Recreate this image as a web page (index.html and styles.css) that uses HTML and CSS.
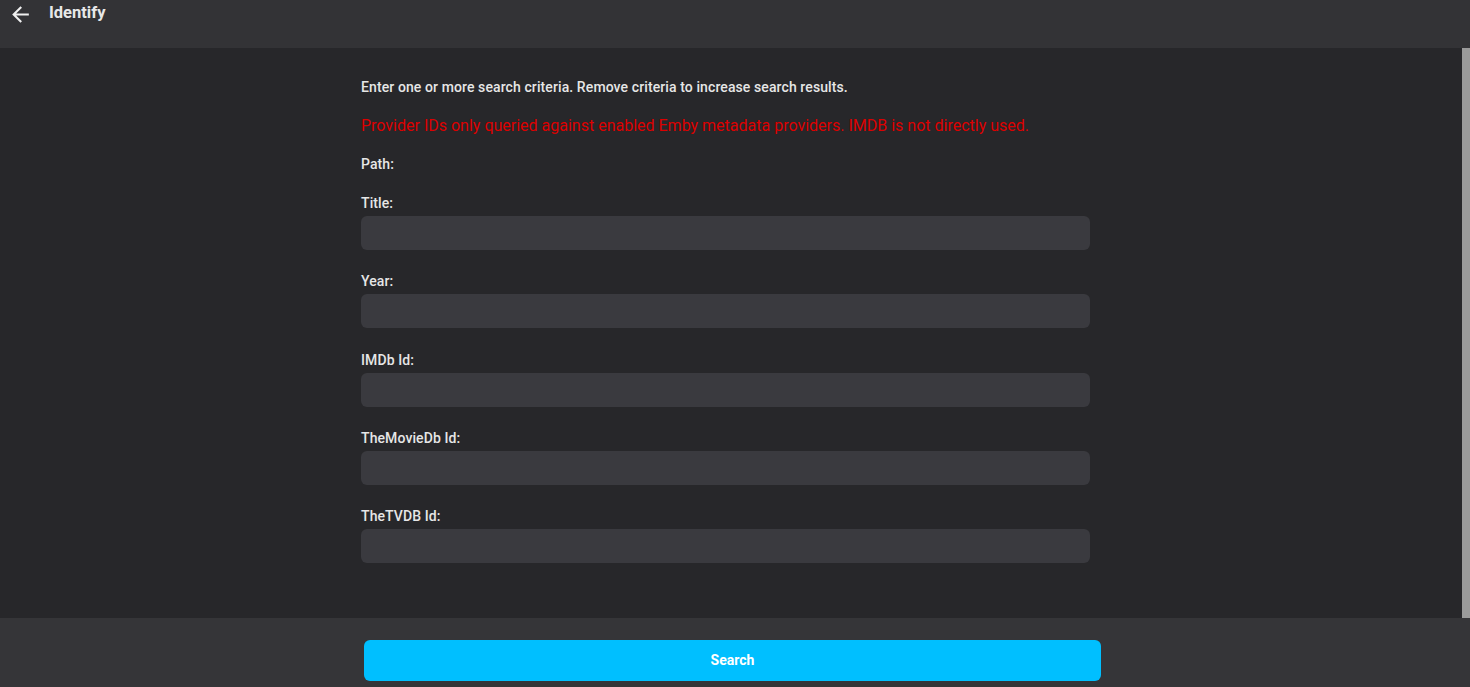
FILE: index.html
```html
<!DOCTYPE html>
<html>
<head>
<meta charset="utf-8">
<link rel="stylesheet" href="styles.css">
</head>
<body>
<div class="page">
  <header class="header">
    <button class="back" aria-label="Back">
      <svg width="25" height="25" viewBox="0 0 24 24"><path d="M20 11H7.83l5.59-5.59L12 4l-8 8 8 8 1.41-1.41L7.83 13H20v-2z" fill="#f0f0f0"/></svg>
    </button>
    <h1 class="title">Identify</h1>
  </header>
  <main class="content">
    <div class="form">
      <p class="intro">Enter one or more search criteria. Remove criteria to increase search results.</p>
      <p class="warn">Provider IDs only queried against enabled Emby metadata providers. IMDB is not directly used.</p>
      <p class="path">Path:</p>
      <div class="field"><label class="label">Title:</label><div class="input"></div></div>
      <div class="field"><label class="label">Year:</label><div class="input"></div></div>
      <div class="field"><label class="label">IMDb Id:</label><div class="input"></div></div>
      <div class="field"><label class="label">TheMovieDb Id:</label><div class="input"></div></div>
      <div class="field"><label class="label">TheTVDB Id:</label><div class="input"></div></div>
    </div>
    <div class="scrollbar"></div>
  </main>
  <footer class="footer">
    <button class="search">Search</button>
  </footer>
</div>
</body>
</html>
```

FILE: styles.css
```css
html, body {
  margin: 0;
  padding: 0;
  background: #27272a;
  font-family: Roboto, "Noto Sans", sans-serif;
  overflow: hidden;
}
.page {
  width: 1470px;
  height: 687px;
  display: flex;
  flex-direction: column;
}
.header {
  height: 48px;
  flex: none;
  background: #333336;
  display: flex;
  align-items: flex-start;
  padding-top: 2px;
  box-sizing: border-box;
}
.back {
  background: none;
  border: 0;
  padding: 0;
  margin: 0 0 0 8px;
  width: 25px;
  height: 25px;
  display: flex;
}
.title {
  margin: 1px 0 0 16px;
  font-size: 16.5px;
  font-weight: 700;
  color: #e8e8e8;
  line-height: 20px;
}
.content {
  position: relative;
  height: 570px;
  flex: none;
  background: #27272a;
}
.form {
  margin-left: 361px;
  width: 729px;
  padding-top: 29px;
}
.intro, .path {
  margin: 0;
  font-size: 14px;
  font-weight: 500;
  line-height: 20px;
  letter-spacing: 0.1px;
  color: #e6e6e6;
}
.warn {
  margin: 19px 0 18px;
  font-size: 16px;
  line-height: 20px;
  color: #dd0000;
}
.field {
  margin-top: 19px;
}
.field + .field {
  margin-top: 21.3px;
}
.label {
  display: block;
  font-size: 14px;
  font-weight: 500;
  line-height: 20px;
  letter-spacing: 0.1px;
  color: #e6e6e6;
  margin-bottom: 3px;
}
.input {
  height: 34px;
  border-radius: 6px;
  background: #3a3a3f;
}
.scrollbar {
  position: absolute;
  top: 0;
  right: 0;
  width: 8px;
  height: 570px;
  background: #9a9a9a;
}
.footer {
  flex: 1;
  background: #353538;
  padding: 22px 0 0 364px;
}
.search {
  width: 737px;
  height: 41px;
  border: 0;
  border-radius: 6px;
  background: #00bfff;
  color: #fff;
  font-family: Roboto, "Noto Sans", sans-serif;
  font-size: 14px;
  font-weight: 700;
  padding: 0 0 2px;
}
```
